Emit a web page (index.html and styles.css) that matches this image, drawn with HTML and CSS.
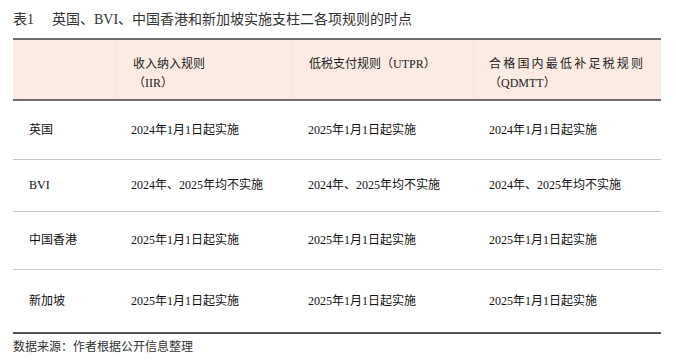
FILE: index.html
```html
<!DOCTYPE html>
<html lang="zh-CN">
<head>
    <meta charset="UTF-8">
    <meta name="viewport" content="width=device-width, initial-scale=1.0">
    <title>支柱二各项规则的时点</title>
    <link rel="stylesheet" href="styles.css">
</head>
<body>
    <div class="page">
        <p class="caption">表1<span class="gap"></span>英国、BVI、中国香港和新加坡实施支柱二各项规则的时点</p>
        <div class="sheet">
            <div class="row head">
                <div class="cell c1"></div>
                <div class="cell c2">收入纳入规则<br>（IIR）</div>
                <div class="cell c3">低税支付规则（UTPR）</div>
                <div class="cell c4"><span class="spaced">合格国内最低补足税规则</span><br>（QDMTT）</div>
            </div>
            <div class="row r1">
                <div class="cell c1">英国</div>
                <div class="cell c2">2024年1月1日起实施</div>
                <div class="cell c3">2025年1月1日起实施</div>
                <div class="cell c4">2024年1月1日起实施</div>
            </div>
            <div class="row r2">
                <div class="cell c1">BVI</div>
                <div class="cell c2">2024年、2025年均不实施</div>
                <div class="cell c3">2024年、2025年均不实施</div>
                <div class="cell c4">2024年、2025年均不实施</div>
            </div>
            <div class="row r3">
                <div class="cell c1">中国香港</div>
                <div class="cell c2">2025年1月1日起实施</div>
                <div class="cell c3">2025年1月1日起实施</div>
                <div class="cell c4">2025年1月1日起实施</div>
            </div>
            <div class="row r4">
                <div class="cell c1">新加坡</div>
                <div class="cell c2">2025年1月1日起实施</div>
                <div class="cell c3">2025年1月1日起实施</div>
                <div class="cell c4">2025年1月1日起实施</div>
            </div>
        </div>
        <p class="source">数据来源：作者根据公开信息整理</p>
    </div>
</body>
</html>
```

FILE: styles.css
```css
body {
    margin: 0;
    background-color: #fff;
    font-family: "Liberation Serif", "Noto Sans CJK SC", serif;
    color: #111;
}

.page {
    padding: 10px 15px 0 13px;
}

.caption {
    margin: 0;
    font-size: 14px;
    line-height: 20px;
    color: #333;
}

.gap {
    display: inline-block;
    width: 18px;
}

.sheet {
    margin-top: 8px;
    width: 648px;
}

.row {
    display: flex;
    align-items: center;
    box-sizing: border-box;
    font-size: 12px;
    line-height: 19px;
    border-bottom: 1px solid #c8c8c8;
}

.cell {
    padding-left: 16px;
    box-sizing: border-box;
}

.c1 { width: 102px; }
.c2 { width: 177px; }
.c3 { width: 181px; }
.c4 { width: 188px; }

.head {
    height: 63px;
    align-items: stretch;
    background-color: #fbebe3;
    border-top: 2px solid #707070;
    border-bottom: 2px solid #707070;
    color: #222;
}

.head .cell {
    padding-top: 15px;
    border-left: 1px solid #f5e3da;
}

.head .c1 {
    border-left: none;
}

.head .c2 {
    padding-left: 17px;
}

.head .c4 {
    padding-left: 15px;
}

.spaced {
    letter-spacing: 2.2px;
}

.r1 { height: 59px; }
.r2 { height: 52px; }
.r3 { height: 58px; }

.r4 {
    height: 64px;
    border-bottom: 2px solid #555;
}

.source {
    margin: 4px 0 0;
    font-size: 12px;
    line-height: 18px;
    color: #333;
}
```
